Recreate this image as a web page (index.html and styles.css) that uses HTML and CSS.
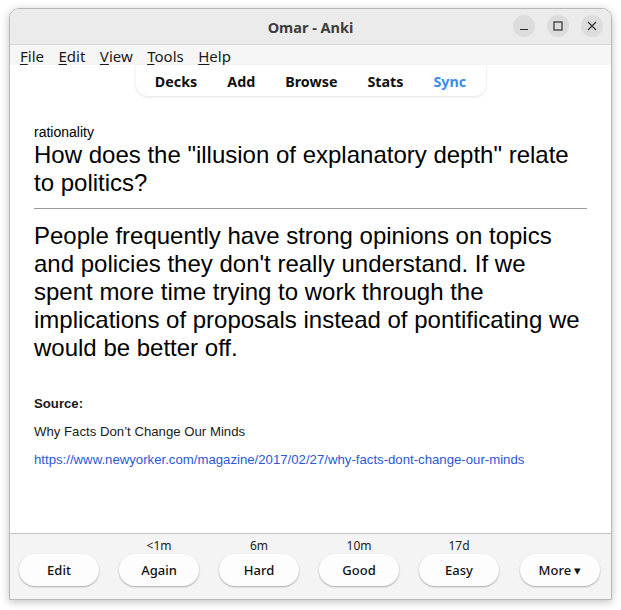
FILE: index.html
```html
<!DOCTYPE html>
<html>
<head>
<meta charset="utf-8">
<link rel="stylesheet" href="styles.css">
</head>
<body>
<div class="window">
  <div class="titlebar">
    <div class="title">Omar - Anki</div>
    <div class="controls">
      <span class="ctl"><svg width="10" height="10" viewBox="0 0 10 10"><path d="M1 8.5h8" stroke="#2e2e2e" stroke-width="1.2"/></svg></span>
      <span class="ctl"><svg width="10" height="10" viewBox="0 0 10 10"><rect x="1" y="1" width="8" height="8" fill="none" stroke="#2e2e2e" stroke-width="1.2"/></svg></span>
      <span class="ctl"><svg width="10" height="10" viewBox="0 0 10 10"><path d="M1 1L9 9M9 1L1 9" stroke="#2e2e2e" stroke-width="1.2"/></svg></span>
    </div>
  </div>
  <div class="menubar">
    <span><u>F</u>ile</span>
    <span><u>E</u>dit</span>
    <span><u>V</u>iew</span>
    <span><u>T</u>ools</span>
    <span><u>H</u>elp</span>
  </div>
  <div class="web">
    <div class="toolbar">
      <span>Decks</span>
      <span>Add</span>
      <span>Browse</span>
      <span>Stats</span>
      <span class="sync">Sync</span>
    </div>
    <div class="card">
      <div class="deck">rationality</div>
      <div class="q">How does the "illusion of explanatory depth" relate to politics?</div>
      <hr class="answer">
      <div class="a">People frequently have strong opinions on topics and policies they don't really understand. If we spent more time trying to work through the implications of proposals instead of pontificating we would be better off.</div>
      <div class="extra">
        <p class="src">Source:</p>
        <p>Why Facts Don’t Change Our Minds</p>
        <p><a href="#">https://www.newyorker.com/magazine/2017/02/27/why-facts-dont-change-our-minds</a></p>
      </div>
    </div>
  </div>
  <div class="bottombar">
    <div class="col"><div class="ivl"></div><div class="btn">Edit</div></div>
    <div class="col"><div class="ivl">&lt;1m</div><div class="btn">Again</div></div>
    <div class="col"><div class="ivl">6m</div><div class="btn">Hard</div></div>
    <div class="col"><div class="ivl">10m</div><div class="btn">Good</div></div>
    <div class="col"><div class="ivl">17d</div><div class="btn">Easy</div></div>
    <div class="col more"><div class="ivl"></div><div class="btn">More ▾</div></div>
  </div>
</div>
</body>
</html>
```

FILE: styles.css
```css
html, body {
  margin: 0;
  padding: 0;
  background: #ffffff;
}
body {
  width: 621px;
  height: 610px;
  overflow: hidden;
  font-family: "Noto Sans", sans-serif;
}
.window {
  margin: 8px 0 0 9px;
  width: 603px;
  height: 592px;
  box-sizing: border-box;
  border: 1px solid #b8b8b8;
  border-radius: 10px 10px 0 0;
  display: flex;
  flex-direction: column;
  overflow: hidden;
  box-shadow: 0 2px 8px rgba(0,0,0,0.25);
}
.titlebar {
  height: 35px;
  flex: none;
  background: #ebebeb;
  border-bottom: 1px solid #d8d8d8;
  display: flex;
  align-items: center;
  justify-content: center;
  position: relative;
}
.title {
  font-weight: bold;
  font-size: 14.5px;
  color: #3d3d3d;
}
.controls {
  position: absolute;
  right: 8px;
  top: 6px;
  display: flex;
  gap: 12px;
}
.ctl {
  width: 22px;
  height: 22px;
  border-radius: 50%;
  background: #dcdcdc;
  display: flex;
  align-items: center;
  justify-content: center;
}
.menubar {
  height: 20px;
  flex: none;
  background: #f6f6f6;
  display: flex;
  align-items: flex-start;
  gap: 14.5px;
  padding-left: 10px;
  font-size: 15px;
  color: #1a1a1a;
}
.menubar span { line-height: 20px; margin-top: 1px; }
.menubar u { text-decoration-thickness: 1px; text-underline-offset: 2px; }
.web {
  flex: 1;
  background: #ffffff;
  display: flex;
  flex-direction: column;
}
.toolbar {
  align-self: center;
  width: 350px;
  height: 31px;
  box-sizing: border-box;
  display: flex;
  justify-content: center;
  align-items: center;
  gap: 30px;
  border-radius: 0 0 12px 12px;
  box-shadow: 0 1px 3px rgba(0,0,0,0.12);
  font-weight: bold;
  font-size: 14.3px;
  color: #111;
  padding-top: 1px;
}
.toolbar .sync { color: #3d8af0; }
.card {
  padding: 27px 24px 0 24px;
  font-family: "Liberation Sans", Arial, sans-serif;
  color: #000;
}
.deck {
  font-size: 14px;
  line-height: 18px;
}
.q, .a {
  font-size: 24px;
  line-height: 28px;
}
hr.answer {
  border: none;
  border-top: 1px solid #9a9a9a;
  margin: 11px 0 13px 0;
  height: 0;
}
.extra {
  margin-top: 34px;
  font-size: 13.2px;
  line-height: 15px;
  color: #1a1a1a;
}
.extra p { margin: 0 0 13px 0; }
.extra .src { font-weight: bold; }
.extra a { color: #2a59d6; text-decoration: none; }
.bottombar {
  height: 63px;
  flex: none;
  background: #f4f4f4;
  border-top: 1px solid #c4c4c4;
  display: flex;
  padding: 2px 10px 0 9px;
  gap: 20px;
}
.col {
  width: 80px;
  display: flex;
  flex-direction: column;
  align-items: center;
}
.col.more { margin-left: 1px; }
.ivl {
  height: 18px;
  line-height: 20px;
  font-size: 12px;
  color: #222;
}
.btn {
  width: 80px;
  height: 32px;
  box-sizing: border-box;
  border-radius: 16px;
  background: #fdfdfd;
  box-shadow: 0 1px 2px rgba(0,0,0,0.3);
  display: flex;
  align-items: center;
  justify-content: center;
  font-size: 13px;
  font-weight: 500;
  color: #111;
}
```
